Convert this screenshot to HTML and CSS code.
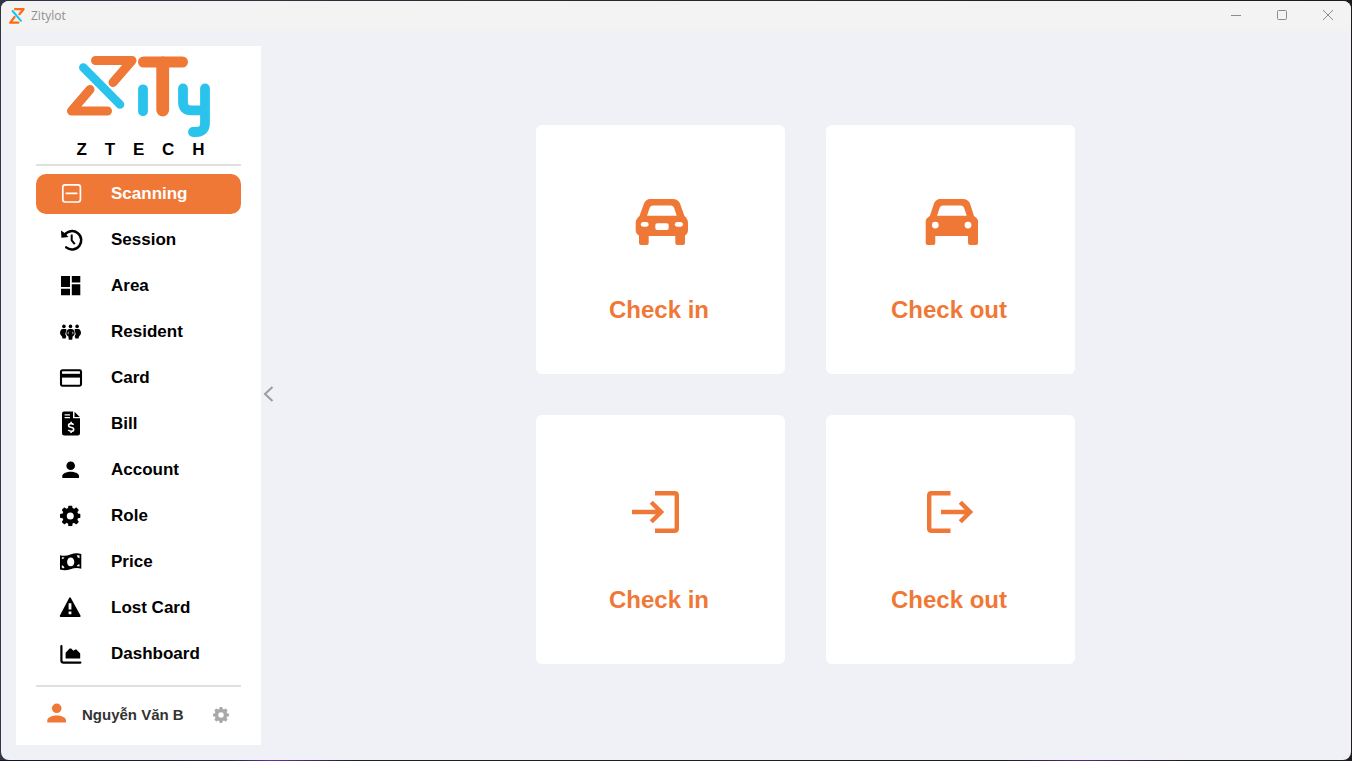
FILE: index.html
```html
<!DOCTYPE html>
<html lang="en">
<head>
<meta charset="utf-8">
<title>Zitylot</title>
<link rel="stylesheet" href="styles.css">
</head>
<body>
<svg class="defs" aria-hidden="true">
  <symbol id="gear" viewBox="0 0 20 20">
    <circle cx="10" cy="10" r="5.6" fill="none" stroke="currentColor" stroke-width="4.4"/>
    <g id="teeth">
      <path id="tooth" d="M7.7 4L8 .8Q8.1 0 8.9 0H11.1Q11.9 0 12 .8L12.3 4ZM7.7 16L8 19.2Q8.1 20 8.9 20H11.1Q11.9 20 12 19.2L12.3 16Z"/>
      <use href="#tooth" transform="rotate(45 10 10)"/>
      <use href="#tooth" transform="rotate(90 10 10)"/>
      <use href="#tooth" transform="rotate(135 10 10)"/>
    </g>
  </symbol>
</svg>
<div class="window">
  <header class="titlebar">
    <svg class="app-icon" viewBox="0 0 16 16" aria-hidden="true">
      <g fill="none" stroke-linecap="round" stroke-linejoin="round" stroke-width="2.2">
        <path d="M6 1.2H14.6L10.4 6.2M5.6 9L1.2 14.6H9.4" stroke="#ff6a13"/>
        <path d="M3.6 3L12 12.8" stroke="#19c2f0" stroke-width="2"/>
      </g>
    </svg>
    <span class="title">Zitylot</span>
    <div class="window-controls">
      <button type="button" aria-label="Minimize"><svg viewBox="0 0 12 12"><path d="M1 5.5H11"/></svg></button>
      <button type="button" aria-label="Maximize"><svg viewBox="0 0 12 12"><rect x="1.5" y=".5" width="9" height="9" rx="1"/></svg></button>
      <button type="button" aria-label="Close"><svg viewBox="0 0 12 12"><path d="M1 0L11 10M11 0L1 10"/></svg></button>
    </div>
  </header>
  <div class="content">
    <aside class="sidebar">
      <div class="brand">
        <svg class="logo" viewBox="0 0 144 82" role="img" aria-label="Zity">
          <g fill="none" stroke-linecap="round" stroke-linejoin="round">
            <g stroke="#f07837">
              <path d="M28.5 4.5H65L46 26.5M23 33.5L4.5 55H40.5" stroke-width="9"/>
              <path d="M76.5 6H115.5" stroke-width="11"/>
              <path d="M95.7 7V54" stroke-width="12.8"/>
            </g>
            <g stroke="#29c3ec">
              <path d="M16.3 11.5L53 48.5" stroke-width="8.6"/>
              <path d="M76 33.3V55.2M116 32.5V46Q116 54.3 124 54.3H138M138 32.5V67Q138 76 129 76H126" stroke-width="9.8"/>
            </g>
          </g>
        </svg>
        <div class="brand-name"><span>Z</span><span>T</span><span>E</span><span>C</span><span>H</span></div>
      </div>
      <nav class="menu">
        <button type="button" class="item active" aria-current="page">
          <svg class="icon" viewBox="0 0 24 24"><path d="M6.2 2.8H19Q21.4 2.8 21.4 5.2V17.6Q21.4 20 19 20H6.2Q3.8 20 3.8 17.6V5.2Q3.8 2.8 6.2 2.8ZM6.7 11.4H18.4" fill="none" stroke="currentColor" stroke-width="1.7"/></svg>
          Scanning</button>
        <button type="button" class="item">
          <svg class="icon" viewBox="0 0 24 24"><path d="M5.6 6.9A9.2 9.2 0 1 1 7.2 19.4" fill="none" stroke="currentColor" stroke-width="2.5" stroke-linecap="round"/><path d="M2 2.6L4.8 4.6L7.2 6.7L9.6 9L2.4 9.8Z"/><path d="M12.7 6.6V12.3L15.8 16.2" fill="none" stroke="currentColor" stroke-width="2"/></svg>
          Session</button>
        <button type="button" class="item">
          <svg class="icon" viewBox="0 0 24 24"><path d="M2 2H11V13H2ZM2 14.8H11V21.2H2ZM12.8 2H21.3V8.4H12.8ZM12.8 10.2H21.3V21.2H12.8Z"/></svg>
          Area</button>
        <button type="button" class="item">
          <svg class="icon" viewBox="0 0 24 24"><circle cx="4.9" cy="6.4" r="1.8"/><circle cx="11.5" cy="6.4" r="1.8"/><circle cx="18.1" cy="6.4" r="1.8"/><path d="M3.7 9H6.6Q8.1 9.2 7.3 10.4Q5.6 13.5 7.3 16.4L6.5 18.6H3.5L3 16.5Q1 14.8 1 13.1Q1.2 9.3 3.7 9ZM19.3 9H16.4Q14.9 9.2 15.7 10.4Q17.4 13.5 15.7 16.4L16.5 18.6H19.5L20 16.5Q22 14.8 22 13.1Q21.8 9.3 19.3 9Z"/><path d="M10.2 9H12.8Q15.7 9.7 15.7 13.5Q15.6 15.4 13.6 16.6L13.2 19.8H9.8L9.4 16.6Q7.4 15.4 7.3 13.5Q7.3 9.7 10.2 9Z"/><path d="M9.4 11.8L9 13.2L9.5 14.2M13.6 11.8L14 13.2L13.5 14.2" fill="none" stroke="#fff" stroke-width=".7"/></svg>
          Resident</button>
        <button type="button" class="item">
          <svg class="icon" viewBox="0 0 24 24"><rect x="2" y="4.3" width="20" height="15.4" rx="1.4" fill="none" stroke="currentColor" stroke-width="2.1"/><path d="M2 7.8H22V11.6H2Z"/></svg>
          Card</button>
        <button type="button" class="item">
          <svg class="icon" viewBox="0 0 24 24"><path d="M5 -.5H14V6.3H21V21.3Q21 23.5 18.8 23.5H5.2Q3 23.5 3 21.3V1.5Q3 -.5 5 -.5ZM15.5 -.2L20.8 5H15.5Z"/><path d="M5.6 2.8H11M5.6 5.6H11" stroke="#fff" stroke-width="1.3"/><path d="M14.6 12.7Q13.5 11.6 12 11.6Q9.6 11.6 9.6 13.4Q9.6 14.8 12 15.3Q14.7 15.8 14.7 17.4Q14.7 19.2 12.1 19.2Q10.3 19.2 9.2 18M12.1 9.8V11.6M12.1 19.2V21.1" fill="none" stroke="#fff" stroke-width="1.6"/></svg>
          Bill</button>
        <button type="button" class="item">
          <svg class="icon" viewBox="0 0 24 24"><circle cx="11.7" cy="7.7" r="4.3"/><path d="M3.3 20V17.8C3.3 15.3 8 13.7 11.7 13.7S20 15.3 20 17.8V20Z"/></svg>
          Account</button>
        <button type="button" class="item">
          <svg class="icon" viewBox="0 0 24 24"><use href="#gear" x="1" y="1.6" width="20.6" height="20.6"/></svg>
          Role</button>
        <button type="button" class="item">
          <svg class="icon" viewBox="0 0 24 24"><path fill-rule="evenodd" d="M1 5.2Q6 6.7 11.5 4.6Q17 2.4 22.3 4V18.7Q17 17.2 11.5 19.3Q6 21.2 1 19.6ZM11.7 7.4C9.6 7.4 8.1 9.2 8.1 11.9S9.6 16.3 11.7 16.3 15.3 14.6 15.3 11.9 13.8 7.4 11.7 7.4Z"/><path d="M3 8.8V7.4L5.2 7.6Q4.8 8.8 3 8.8ZM3 15.6V17.8L5.2 18Q5 16 3 15.6ZM20.3 8V5.6L18 5.5Q18.4 7.8 20.3 8ZM20.3 14.5V16.3L18 16Q18.4 14.7 20.3 14.5Z" fill="#fff" stroke="#fff" stroke-width=".4"/></svg>
          Price</button>
        <button type="button" class="item">
          <svg class="icon" viewBox="0 0 24 24"><path d="M11 2.4L20.6 20H1.8Z" stroke="currentColor" stroke-width="2" stroke-linejoin="round"/><path d="M9.6 7.2H12.4V13.6H9.6ZM9.6 15.4H12.4V18.2H9.6Z" fill="#fff"/></svg>
          Lost Card</button>
        <button type="button" class="item">
          <svg class="icon" viewBox="0 0 24 24"><path d="M2.4 4V18.4Q2.4 20.6 4.6 20.6H21.4" fill="none" stroke="currentColor" stroke-width="2.2" stroke-linecap="round"/><path d="M6.6 10.8L10.6 6.6H12.2L14.4 8.8L16.2 7.6H17.4L21.2 11.4V16.4H6.6Z"/></svg>
          Dashboard</button>
      </nav>
      <footer class="user">
        <svg class="avatar" viewBox="0 0 20 22" aria-hidden="true"><circle cx="9.7" cy="6.3" r="4.8"/><path d="M.3 20.5V18.2C.3 15.3 5.5 13.4 9.7 13.4S19 15.3 19 18.2V20.5Z"/></svg>
        <span class="user-name">Nguyễn Văn B</span>
        <button type="button" class="settings" aria-label="Settings"><svg viewBox="0 0 20 20"><use href="#gear"/></svg></button>
      </footer>
    </aside>
    <button type="button" class="collapse" aria-label="Collapse sidebar"><svg viewBox="0 0 14 18"><path d="M11.5 2L4 9L11.5 16"/></svg></button>
    <main class="main">
      <div class="cards">
        <button type="button" class="card">
          <svg viewBox="0 0 65 64"><path fill-rule="evenodd" d="M22 9H45Q50 9 52 13.5L56.5 26Q60 29 60 33V40Q60 43.5 57 45.5V53Q57 55 55 55H49.5Q47.3 55 47.3 53V46H20.7V53Q20.7 55 18.7 55H13Q11 55 11 53V45.5Q7.7 43.5 7.7 40V33Q7.7 29 11.5 26L16 13.5Q18 9 22 9ZM25 15.5Q22.7 15.5 21.8 17.5L19 25.7H48.7L46 17.5Q45 15.5 43 15.5ZM15 32H18.5Q20.7 32.5 20.7 34.4T18.5 36.7H15Q12.7 36.3 12.7 34.4T15 32ZM49 32H52.7Q55 32.5 55 34.4T52.7 36.7H49Q46.7 36.3 46.7 34.4T49 32ZM29.3 33.3H38.7Q40.7 33.3 40.7 35.3V38Q40.7 40 38.7 40H29.3Q27.3 40 27.3 38V35.3Q27.3 33.3 29.3 33.3Z"/></svg>
          <span>Check in</span></button>
        <button type="button" class="card">
          <svg viewBox="0 0 65 64"><path fill-rule="evenodd" d="M22 9H45Q50 9 52 13.5L56 26L58.5 28Q60 29.5 60 31V53Q60 55 58 55H52Q50 55 50 53V46H17.3V53Q17.3 55 15.3 55H9.7Q7.7 55 7.7 53V31Q7.7 29.5 9.2 28L11.8 26L16 13.5Q18 9 22 9ZM25 15.5Q22.7 15.5 21.8 17.5L19 25.7H48.7L46 17.5Q45 15.5 43 15.5ZM17.3 31.7A3.4 3.4 0 1 0 17.3 38.5A3.4 3.4 0 1 0 17.3 31.7ZM50 31.7A3.4 3.4 0 1 0 50 38.5A3.4 3.4 0 1 0 50 31.7Z"/></svg>
          <span>Check out</span></button>
        <button type="button" class="card">
          <svg viewBox="0 0 65 64"><path class="line" d="M27 13.2H46.6Q48.8 13.2 48.8 15.4V48.6Q48.8 50.8 46.6 50.8H27M4 32H33M23.3 22.2L33.1 32L23.3 41.8"/></svg>
          <span>Check in</span></button>
        <button type="button" class="card">
          <svg viewBox="0 0 65 64"><path class="line" d="M32.5 13.2H13.4Q11.2 13.2 11.2 15.4V48.6Q11.2 50.8 13.4 50.8H32.5M23 32H52M42.3 22.2L52.1 32L42.3 41.8"/></svg>
          <span>Check out</span></button>
      </div>
    </main>
  </div>
</div>
</body>
</html>
```

FILE: styles.css
```css
* {
  box-sizing: border-box;
}

body {
  margin: 0;
  min-height: 100vh;
  padding: 1px;
  display: flex;
  font-family: "Liberation Sans", Arial, sans-serif;
  background:
    linear-gradient(90deg, #0e1626 0%, #1d2438 17%, #6a2f9c 20%, #20202c 26%, #1c1c24 74%, #55267c 80%, #1c1c1c 88%) bottom / 100% 1px no-repeat,
    linear-gradient(90deg, #2f3747, #26262b 50%, #1c1c1c);
}

button {
  margin: 0;
  padding: 0;
  border: 0;
  background: none;
  font: inherit;
  color: inherit;
  cursor: pointer;
}

svg {
  display: block;
  flex: none;
  fill: currentColor;
}

.defs {
  position: absolute;
  width: 0;
  height: 0;
}

.window {
  flex: 1;
  display: flex;
  flex-direction: column;
  overflow: hidden;
  border-radius: 8px;
  background: #f0f1f6;
}

.titlebar {
  display: flex;
  align-items: center;
  gap: 6px;
  height: 30px;
  padding-left: 8px;
  background: #f3f3f3;
}

.app-icon {
  width: 16px;
  height: 16px;
}

.title {
  font: 12px/16px "Open Sans", sans-serif;
  color: #909090;
}

.window-controls {
  display: flex;
  align-self: stretch;
  margin-left: auto;
}

.window-controls button {
  display: grid;
  place-items: center;
  width: 46px;
}

.window-controls svg {
  width: 12px;
  height: 12px;
  fill: none;
  stroke: #8c8c8c;
}

.content {
  flex: 1;
  display: flex;
  padding: 15px;
}

.sidebar {
  display: flex;
  flex-direction: column;
  width: 245px;
  padding: 0 20px;
  background: #fff;
}

.brand {
  display: flex;
  flex-direction: column;
  align-items: center;
  padding: 10px 0 3px;
  border-bottom: 2px solid #e0e0e0;
}

.logo {
  width: 144px;
  height: 82px;
}

.brand-name {
  display: flex;
  justify-content: space-between;
  width: 132px;
  padding: 1px 0 0 4px;
  font-size: 17px;
  font-weight: bold;
  line-height: 22px;
  color: #000;
}

.menu {
  display: flex;
  flex-direction: column;
  gap: 6px;
  padding: 8px 0 11px;
  border-bottom: 2px solid #e0e0e0;
}

.item {
  display: flex;
  align-items: center;
  gap: 28px;
  height: 40px;
  padding-left: 23px;
  border-radius: 10px;
  font-size: 17px;
  font-weight: bold;
  color: #000;
}

.item.active {
  background: #f07837;
  color: #fff;
}

.icon {
  width: 24px;
  height: 24px;
  overflow: visible;
}

.user {
  flex: 1;
  display: flex;
  align-items: center;
  padding: 0 12px 2px 11px;
}

.avatar {
  width: 20px;
  height: 22px;
  margin-bottom: 4px;
  color: #f07837;
}

.user-name {
  margin-left: 15px;
  padding-bottom: 2px;
  font-size: 15px;
  font-weight: bold;
  color: #333;
}

.settings {
  margin-left: auto;
  color: #a9a9a9;
}

.settings svg {
  width: 16px;
  height: 16px;
}

.collapse {
  display: grid;
  place-items: center;
  width: 14px;
  padding-bottom: 3px;
}

.collapse svg {
  width: 14px;
  height: 18px;
  fill: none;
  stroke: #9c9c9c;
  stroke-width: 2;
}

.main {
  flex: 1;
  display: grid;
  place-items: center;
  padding-bottom: 2px;
}

.cards {
  display: grid;
  grid-template-columns: repeat(2, 249px);
  gap: 41px;
}

.card {
  display: flex;
  flex-direction: column;
  align-items: center;
  gap: 42px;
  padding: 65px 0 50px;
  border-radius: 6px;
  background: #fff;
  color: #f07837;
  font-size: 24px;
  font-weight: bold;
  line-height: 28px;
}

.card span {
  padding-right: 3px;
}

.card svg {
  width: 65px;
  height: 64px;
}

.card .line {
  fill: none;
  stroke: currentColor;
  stroke-width: 4.4;
}
```
